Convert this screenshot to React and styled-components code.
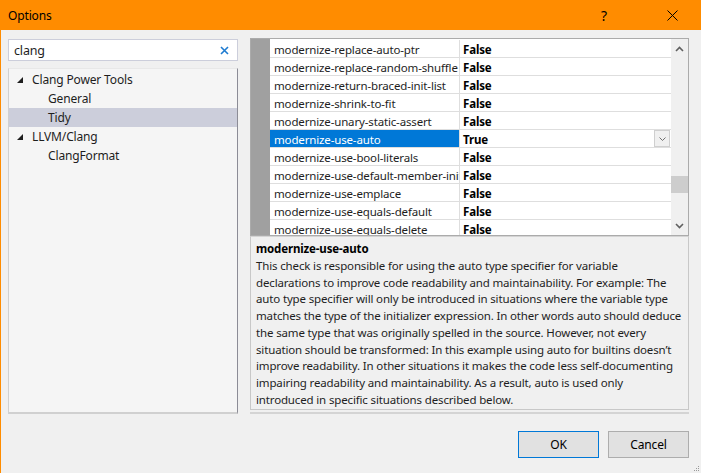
import React from "react";
import styled, { createGlobalStyle } from "styled-components";

const rules = [
  { name: "modernize-replace-auto-ptr", value: "False" },
  { name: "modernize-replace-random-shuffle", value: "False" },
  { name: "modernize-return-braced-init-list", value: "False" },
  { name: "modernize-shrink-to-fit", value: "False" },
  { name: "modernize-unary-static-assert", value: "False" },
  { name: "modernize-use-auto", value: "True", selected: true },
  { name: "modernize-use-bool-literals", value: "False" },
  { name: "modernize-use-default-member-init", value: "False" },
  { name: "modernize-use-emplace", value: "False" },
  { name: "modernize-use-equals-default", value: "False" },
  { name: "modernize-use-equals-delete", value: "False" },
];

const description = [
  "This check is responsible for using the auto type specifier for variable",
  "declarations to improve code readability and maintainability. For example: The",
  "auto type specifier will only be introduced in situations where the variable type",
  "matches the type of the initializer expression. In other words auto should deduce",
  "the same type that was originally spelled in the source. However, not every",
  "situation should be transformed: In this example using auto for builtins doesn\u2019t",
  "improve readability. In other situations it makes the code less self-documenting",
  "impairing readability and maintainability. As a result, auto is used only",
  "introduced in specific situations described below.",
];

const tree = [
  { label: "Clang Power Tools", level: 0 },
  { label: "General", level: 1 },
  { label: "Tidy", level: 1, selected: true },
  { label: "LLVM/Clang", level: 0 },
  { label: "ClangFormat", level: 1 },
];

export default function App() {
  return (
    <>
      <GlobalStyle />
      <Window>
        <TitleBar>
          <Title>Options</Title>
          <TitleButton $gap={22}>?</TitleButton>
          <TitleButton $gap={6}>
            <svg width="11" height="11" viewBox="0 0 11 11">
              <path d="M0.5 0.5L10.5 10.5M10.5 0.5L0.5 10.5" stroke="#000" strokeWidth="1" />
            </svg>
          </TitleButton>
        </TitleBar>

        <Body>
          <LeftColumn>
            <Search>
              <span>clang</span>
              <svg width="9" height="9" viewBox="0 0 9 9">
                <path d="M1 1L8 8M8 1L1 8" stroke="#1E7BD0" strokeWidth="1.6" />
              </svg>
            </Search>
            <Tree>
              {tree.map(item => (
                <TreeRow key={item.label} $level={item.level} $selected={item.selected}>
                  {item.level === 0 && (
                    <Expander width="6" height="6" viewBox="0 0 6 6">
                      <polygon points="6,0 6,6 0,6" fill="#1e1e1e" />
                    </Expander>
                  )}
                  {item.label}
                </TreeRow>
              ))}
            </Tree>
          </LeftColumn>

          <RightColumn>
            <Grid>
              <Gutter />
              <Rows>
                {rules.map(rule => (
                  <Row key={rule.name}>
                    <NameCell $selected={rule.selected}>{rule.name}</NameCell>
                    <ValueCell>
                      {rule.value}
                      {rule.selected && (
                        <DropButton>
                          <svg width="7" height="4" viewBox="0 0 7 4">
                            <path d="M0.5 0.5L3.5 3.5L6.5 0.5" stroke="#707070" fill="none" />
                          </svg>
                        </DropButton>
                      )}
                    </ValueCell>
                  </Row>
                ))}
              </Rows>
              <ScrollBar>
                <svg width="9" height="6" viewBox="0 0 9 6">
                  <path d="M1 5L4.5 1.5L8 5" stroke="#606060" strokeWidth="1.6" fill="none" />
                </svg>
                <Track>
                  <Thumb />
                </Track>
                <svg width="9" height="6" viewBox="0 0 9 6">
                  <path d="M1 1L4.5 4.5L8 1" stroke="#606060" strokeWidth="1.6" fill="none" />
                </svg>
              </ScrollBar>
            </Grid>
            <Description>
              <DescTitle>modernize-use-auto</DescTitle>
              {description.map(line => (
                <DescLine key={line}>{line}</DescLine>
              ))}
            </Description>
            <Separator />
          </RightColumn>
        </Body>

        <Footer>
          <Button $default>OK</Button>
          <Button>Cancel</Button>
        </Footer>

        <Grip width="7" height="7" viewBox="0 0 7 7">
          {[
            [5, 1],
            [3, 3],
            [5, 3],
            [1, 5],
            [3, 5],
            [5, 5],
          ].map(([x, y]) => (
            <rect key={`${x}-${y}`} x={x} y={y} width="1" height="1" fill="#9a9a9a" />
          ))}
        </Grip>
      </Window>
    </>
  );
}

const GlobalStyle = createGlobalStyle`
  body {
    margin: 0;
    background: #f0f0f0;
    font-family: "Noto Sans", "Liberation Sans", sans-serif;
    font-size: 11.5px;
    letter-spacing: -0.15px;
    color: #1e1e1e;
  }
`;

const Window = styled.div`
  position: relative;
  width: 701px;
  height: 473px;
  box-sizing: border-box;
  border-left: 1px solid #ff8c00;
  background: #f0f0f0;
  display: flex;
  flex-direction: column;
  overflow: hidden;
`;

const TitleBar = styled.div`
  height: 30px;
  margin-left: -1px;
  background: #ff8c00;
  display: flex;
  align-items: center;
  padding-left: 8px;
`;

const Title = styled.div`
  flex: 1;
  color: #000;
  font-size: 12px;
`;

const TitleButton = styled.div`
  width: 46px;
  height: 30px;
  margin-right: ${props => props.$gap}px;
  display: flex;
  align-items: center;
  justify-content: center;
  font-size: 14px;
  color: #000;
`;

const Body = styled.div`
  display: grid;
  grid-template-columns: 230px 439px;
  column-gap: 12px;
  padding: 8px 0 0 7px;
  height: 376px;
`;

const LeftColumn = styled.div`
  display: flex;
  flex-direction: column;
  padding-top: 1px;
  gap: 7px;
`;

const Search = styled.div`
  height: 22px;
  box-sizing: border-box;
  border: 1px solid #cccedb;
  background: #fff;
  display: flex;
  align-items: center;
  justify-content: space-between;
  padding: 0 8px 0 5px;
  font-size: 12.5px;
  color: #1e1e1e;
`;

const Tree = styled.div`
  height: 346px;
  box-sizing: border-box;
  background: #f5f5f5;
  border-left: 1px solid #d0d0d0;
  border-top: 1px solid #e8e8e8;
  border-right: 1px solid #8c8c96;
  border-bottom: 2px solid #d0d0d0;
  padding-top: 1px;
`;

const TreeRow = styled.div`
  height: 19px;
  display: flex;
  align-items: center;
  padding-left: ${props => (props.$level === 0 ? 8 : 39)}px;
  background: ${props => (props.$selected ? "#cccedb" : "transparent")};
  font-size: 12px;
  color: #1e1e1e;
`;

const Expander = styled.svg`
  margin-right: 9px;
  margin-top: 1px;
`;

const RightColumn = styled.div`
  display: flex;
  flex-direction: column;
`;

const Grid = styled.div`
  height: 198px;
  box-sizing: border-box;
  border: 1px solid #ababab;
  background: #f0f0f0;
  display: flex;
  overflow: hidden;
`;

const Gutter = styled.div`
  width: 20px;
  margin-left: -1px;
  background: #a0a0a0;
`;

const Rows = styled.div`
  width: 401px;
  padding-top: 1px;
  background: #fff;
  overflow: hidden;
`;

const Row = styled.div`
  height: 18px;
  display: grid;
  grid-template-columns: 190px 211px;
  box-sizing: border-box;
  border-bottom: 1px solid #dedede;
`;

const NameCell = styled.div`
  display: flex;
  align-items: center;
  padding: 1px 0 0 4px;
  white-space: nowrap;
  overflow: hidden;
  border-right: 1px solid #dedede;
  background: ${props => (props.$selected ? "#0078d7" : "#fff")};
  color: ${props => (props.$selected ? "#fff" : "#1e1e1e")};
`;

const ValueCell = styled.div`
  position: relative;
  display: flex;
  align-items: center;
  padding: 1px 0 0 3px;
  font-weight: 700;
  color: #000;
`;

const DropButton = styled.div`
  position: absolute;
  right: 1px;
  top: 0;
  width: 16px;
  height: 17px;
  box-sizing: border-box;
  border: 1px solid #cfcfcf;
  background: #f0f0f0;
  display: flex;
  align-items: center;
  justify-content: center;
`;

const ScrollBar = styled.div`
  flex: 1;
  display: flex;
  flex-direction: column;
  align-items: center;
  padding: 7px 0 6px;
  background: #f0f0f0;
`;

const Track = styled.div`
  flex: 1;
  width: 100%;
  padding-top: 124px;
`;

const Thumb = styled.div`
  width: 100%;
  height: 17px;
  background: #cdcdcd;
`;

const Description = styled.div`
  height: 174px;
  box-sizing: border-box;
  border: 1px solid #c8c8c8;
  border-top: 1px solid #d4d4d4;
  padding: 3px 5px;
  color: #1e1e1e;
`;

const DescTitle = styled.div`
  font-weight: 700;
  line-height: 18px;
  color: #000;
`;

const DescLine = styled.div`
  white-space: nowrap;
  line-height: 16.7px;
`;

const Separator = styled.div`
  margin-top: 2px;
  height: 2px;
  background: #d4d4d4;
`;

const Footer = styled.div`
  display: flex;
  justify-content: flex-end;
  gap: 9px;
  padding: 17px 12px 0 0;
`;

const Button = styled.div`
  width: 81px;
  height: 27px;
  box-sizing: border-box;
  display: flex;
  align-items: center;
  justify-content: center;
  background: #e1e1e1;
  border: 1px solid ${props => (props.$default ? "#0078d7" : "#adadad")};
  color: #000;
  font-size: 12px;
`;

const Grip = styled.svg`
  position: absolute;
  right: 1px;
  bottom: 1px;
`;
